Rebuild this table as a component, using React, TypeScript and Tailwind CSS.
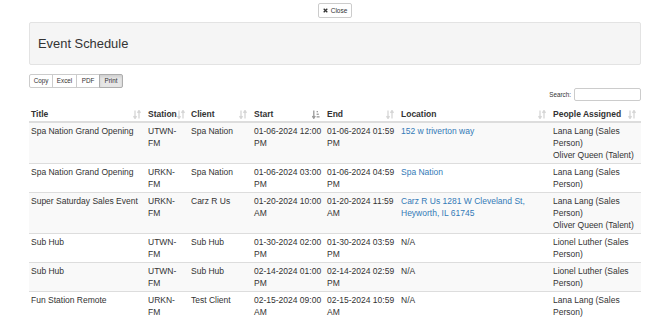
import { FC } from 'react';

type Row = {
  title: string;
  station: string;
  client: string;
  start: string;
  end: string;
  location: string;
  link: boolean;
  people: string[];
}

const rows: Row[] = [
  { title: 'Spa Nation Grand Opening', station: 'UTWN-FM', client: 'Spa Nation', start: '01-06-2024 12:00 PM', end: '01-06-2024 01:59 PM', location: '152 w triverton way', link: true, people: ['Lana Lang (Sales Person)', 'Oliver Queen (Talent)'] },
  { title: 'Spa Nation Grand Opening', station: 'URKN-FM', client: 'Spa Nation', start: '01-06-2024 03:00 PM', end: '01-06-2024 04:59 PM', location: 'Spa Nation', link: true, people: ['Lana Lang (Sales Person)'] },
  { title: 'Super Saturday Sales Event', station: 'URKN-FM', client: 'Carz R Us', start: '01-20-2024 10:00 AM', end: '01-20-2024 11:59 AM', location: 'Carz R Us 1281 W Cleveland St, Heyworth, IL 61745', link: true, people: ['Lana Lang (Sales Person)', 'Oliver Queen (Talent)'] },
  { title: 'Sub Hub', station: 'UTWN-FM', client: 'Sub Hub', start: '01-30-2024 02:00 PM', end: '01-30-2024 03:59 PM', location: 'N/A', link: false, people: ['Lionel Luther (Sales Person)'] },
  { title: 'Sub Hub', station: 'UTWN-FM', client: 'Sub Hub', start: '02-14-2024 01:00 PM', end: '02-14-2024 02:59 PM', location: 'N/A', link: false, people: ['Lionel Luther (Sales Person)'] },
  { title: 'Fun Station Remote', station: 'URKN-FM', client: 'Test Client', start: '02-15-2024 09:00 AM', end: '02-15-2024 10:59 AM', location: 'N/A', link: false, people: ['Lana Lang (Sales Person)'] },
];

const columns = ['Title', 'Station', 'Client', 'Start', 'End', 'Location', 'People Assigned'];
const widths = ['w-[117px]', 'w-[43px]', 'w-[63px]', 'w-[73px]', 'w-[74px]', 'w-[152px]', 'w-[90px]'];

// two little arrows, the datatables sort glyph
const SortIcon: FC<{ active?: boolean }> = ({ active }) => {
  if (active) {
    return (
      <svg width="8" height="9" viewBox="0 0 8 9" className="shrink-0 text-[#9a9a9a]">
        <path d="M1.8 0.5V7.5M0.3 6L1.8 8.3L3.3 6" stroke="currentColor" strokeWidth="1.3" fill="none" />
        <rect x="4.6" y="1" width="1.4" height="1.3" fill="currentColor" />
        <rect x="4.6" y="3.6" width="2.2" height="1.3" fill="currentColor" />
        <rect x="4.6" y="6.2" width="3" height="1.3" fill="currentColor" />
      </svg>
    );
  }
  return (
    <svg width="8" height="9" viewBox="0 0 8 9" className="shrink-0 text-[#d6d6d6]">
      <path d="M2 0.5V7.8M0.5 6.2L2 8.5L3.5 6.2" stroke="currentColor" strokeWidth="1.3" fill="none" />
      <path d="M6 8.5V1.2M4.5 2.8L6 0.5L7.5 2.8" stroke="currentColor" strokeWidth="1.3" fill="none" />
    </svg>
  );
}

const App: FC = () => {
  return (
    <div className="min-h-[320px] bg-white px-[29px] text-[#333] [font-family:'Liberation_Sans',Arial,sans-serif]">
      <div className="flex justify-center pt-[3px]">
        <button className="flex h-[15px] w-[34px] items-center justify-center gap-[3px] rounded-[2px] border border-[#ccc] bg-white text-[6.5px] text-[#333]">
          <svg width="5" height="5" viewBox="0 0 5 5">
            <path d="M0.7 0.7L4.3 4.3M4.3 0.7L0.7 4.3" stroke="#333" strokeWidth="1.3" />
          </svg>
          Close
        </button>
      </div>

      <div className="mt-[4px] flex h-[43px] items-center rounded-[2px] border border-[#e3e3e3] bg-[#f5f5f5] pl-[8px] pt-[2px]">
        <h2 className="text-[12.9px] leading-none text-[#333]">Event Schedule</h2>
      </div>

      <div className="mt-[9px] flex h-[14px] text-[6.3px]">
        <button className="w-[24px] rounded-l-[2px] border border-[#ccc] bg-white">Copy</button>
        <button className="-ml-px w-[25px] border border-[#ccc] bg-white">Excel</button>
        <button className="-ml-px w-[24px] border border-[#ccc] bg-white">PDF</button>
        <button className="-ml-px w-[24px] rounded-r-[2px] border border-[#adadad] bg-[#e6e6e6] shadow-[inset_0_2px_3px_rgba(0,0,0,0.1)]">Print</button>
      </div>

      <div className="flex items-center justify-end gap-[3px] text-[6.3px]">
        <span>Search:</span>
        <input className="h-[13px] w-[67px] rounded-[2px] border border-[#ccc] bg-white" />
      </div>

      <table className="mt-[5px] w-[612px] table-fixed border-collapse text-[8.5px] leading-[12px]">
        <colgroup>
          {widths.map((w) => (
            <col key={w} className={w} />
          ))}
        </colgroup>
        <thead>
          <tr className="border-b-2 border-[#ddd]">
            {columns.map((c) => (
              <th key={c} className="px-[2px] pb-[1px] pt-[2px] text-left font-bold">
                <div className="flex items-center justify-between pr-[3px]">
                  <span>{c}</span>
                  <SortIcon active={c === 'Start'} />
                </div>
              </th>
            ))}
          </tr>
        </thead>
        <tbody>
          {rows.map((r, i) => (
            <tr key={i} className={`border-t border-[#ddd] align-top ${i % 2 === 0 ? 'bg-[#f9f9f9]' : 'bg-white'}`}>
              <td className="px-[2px] py-[2px]">{r.title}</td>
              <td className="px-[2px] py-[2px]">{r.station}</td>
              <td className="px-[2px] py-[2px]">{r.client}</td>
              <td className="px-[2px] py-[2px]">{r.start}</td>
              <td className="px-[2px] py-[2px]">{r.end}</td>
              <td className="px-[2px] py-[2px]">
                {r.link ? <a className="text-[#337ab7]">{r.location}</a> : r.location}
              </td>
              <td className="px-[2px] py-[2px]">
                {r.people.map((p) => (
                  <div key={p}>{p}</div>
                ))}
              </td>
            </tr>
          ))}
        </tbody>
      </table>
    </div>
  )
}

export default App
